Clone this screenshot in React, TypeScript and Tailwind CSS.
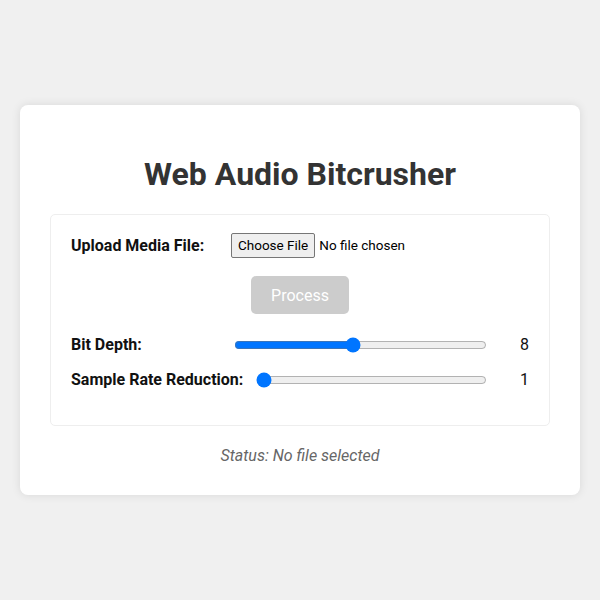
import { useState } from 'react';

export default function App() {
  const [bits, setBits] = useState(8);
  const [rate, setRate] = useState(1);

  return (
    <div className="h-screen bg-[#f0f0f0] flex items-center justify-center font-['Roboto',sans-serif]">
      <div className="w-[560px] bg-white rounded-[8px] shadow-[0_0_10px_rgba(0,0,0,0.1)] p-[30px]">
        <h1 className="text-[32px] leading-[37px] font-bold text-[#333] text-center my-[21px]">
          Web Audio Bitcrusher
        </h1>

        <div className="border border-[#eee] rounded-[5px] p-[20px]">
          {/* upload */}
          <div className="flex items-center h-[21px]">
            <label className="min-w-[150px] mr-[10px] font-bold text-[16px] text-[#111]">
              Upload Media File:
            </label>
            <input
              type="file"
              accept="audio/*,video/*"
              className="text-[13.5px] text-black file:mr-[4px] file:border file:border-[#767676] file:bg-[#efefef] file:rounded-[2px] file:px-[6px] file:py-[1px] file:text-[13.5px] file:text-black"
            />
          </div>

          <div className="flex justify-center mt-[20px] mb-[21px]">
            <button
              type="button"
              disabled
              className="bg-[#ccc] text-white text-[16px] leading-[18px] pt-[11px] pb-[9px] px-[20px] rounded-[5px] cursor-not-allowed"
            >
              Process
            </button>
          </div>

          {/* sliders */}
          <div className="flex items-center h-[20px] mb-[15px]">
            <label className="min-w-[150px] mr-[10px] font-bold text-[16px] text-[#111]">
              Bit Depth:
            </label>
            <input
              type="range"
              min={1}
              max={16}
              value={bits}
              onChange={e => setBits(Number(e.target.value))}
              className="flex-1 ml-[3px]"
            />
            <span className="w-[32px] ml-[10px] text-right text-[16px] text-[#111]">{bits}</span>
          </div>
          <div className="flex items-center h-[20px] mb-[15px]">
            <label className="min-w-[150px] mr-[10px] font-bold text-[16px] text-[#111] whitespace-nowrap">
              Sample Rate Reduction:
            </label>
            <input
              type="range"
              min={1}
              max={50}
              value={rate}
              onChange={e => setRate(Number(e.target.value))}
              className="flex-1 ml-[3px]"
            />
            <span className="w-[32px] ml-[10px] text-right text-[16px] text-[#111]">{rate}</span>
          </div>
        </div>

        <p className="mt-[20px] text-center italic text-[16px] leading-[19px] text-[#666]">
          Status: No file selected
        </p>
      </div>
    </div>
  );
}
